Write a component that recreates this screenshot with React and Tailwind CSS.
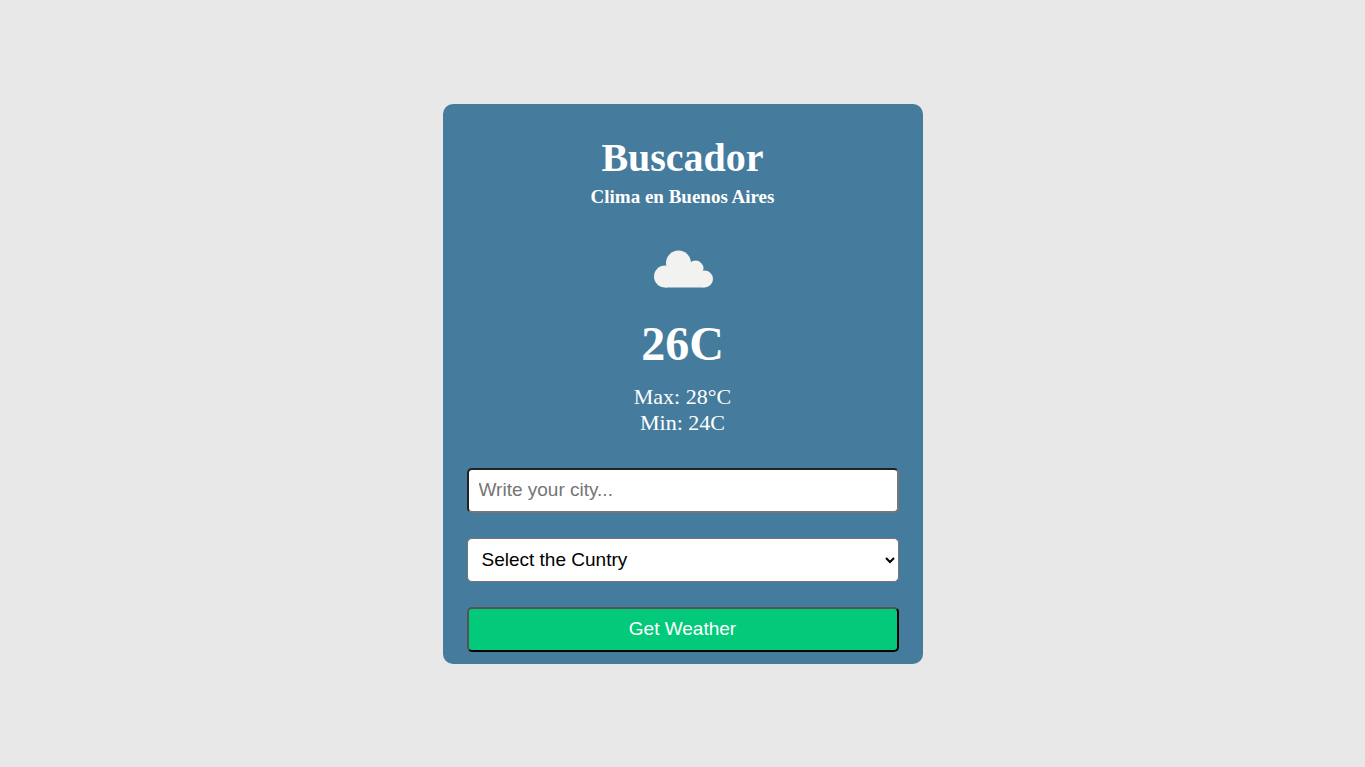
function Cloud() {
  return (
    <svg className="h-[38px] w-[61px]" viewBox="0 0 61 38" fill="#f2f2f0" aria-hidden="true">
      <circle cx="13" cy="26.5" r="11" />
      <circle cx="26.5" cy="13" r="12.5" />
      <circle cx="43.6" cy="18.5" r="7.9" />
      <circle cx="52.5" cy="29" r="8.5" />
      <path d="M13 37.5V20L26 10L42 13L46 22L52.500 26V37.500Z" />
    </svg>
  );
}

export default function App() {
  return (
    <main className="flex min-h-screen items-center justify-center bg-[#e8e8e8] font-['Liberation_Serif',serif]">
      <section className="flex w-full max-w-[480px] flex-col items-center rounded-[10px] bg-[#457b9d] px-6 pt-8 pb-3 text-white">
        <h1 className="text-[40px] leading-[44px] font-bold">Buscador</h1>
        <h2 className="mt-1.5 text-[19px] leading-[22px] font-bold">Clima en Buenos Aires</h2>
        <div className="mt-[42px]">
          <Cloud />
        </div>
        <p className="mt-7 text-5xl leading-[56px] font-bold">26C</p>
        <div className="mt-3 text-center text-[22px] leading-[26px]">
          <p>Max: 28°C</p>
          <p>Min: 24C</p>
        </div>
        <form
          className="mt-8 flex w-full flex-col gap-[25px] font-['Liberation_Sans',sans-serif] text-[19px]"
          onSubmit={(e) => e.preventDefault()}
        >
          <input
            type="text"
            aria-label="City"
            placeholder="Write your city..."
            className="h-[45px] w-full rounded-[5px] border-2 [border-style:inset] border-[#767676] bg-white px-2.5 text-black placeholder:text-[#757575]"
          />
          <select
            aria-label="Country"
            className="h-[44px] w-full rounded-[5px] border border-[#767676] bg-white pl-2.5 text-black"
          >
            <option>Select the Cuntry</option>
          </select>
          <button
            type="submit"
            className="h-[45px] w-full rounded-[5px] border-2 [border-style:outset] border-black bg-[#03c97a] text-white"
          >
            Get Weather
          </button>
        </form>
      </section>
    </main>
  );
}
